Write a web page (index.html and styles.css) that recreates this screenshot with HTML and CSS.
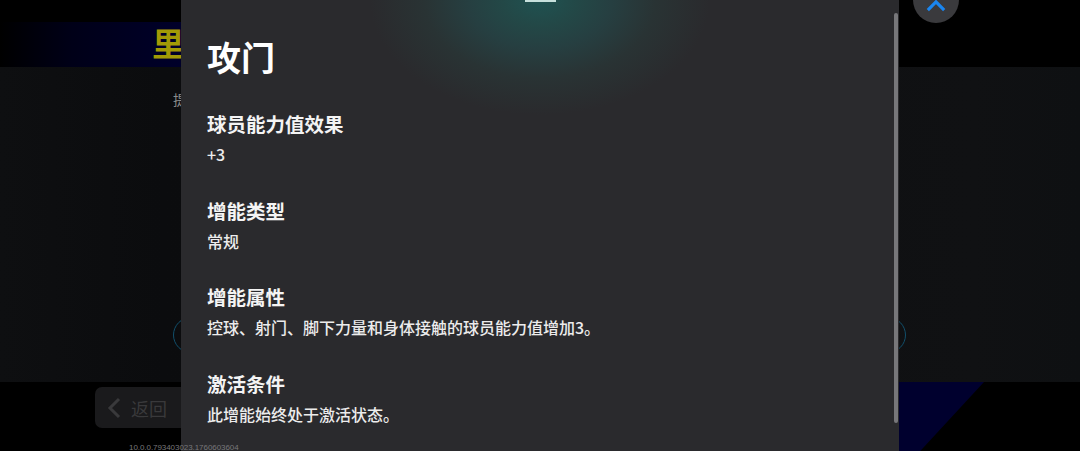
FILE: index.html
```html
<!DOCTYPE html>
<html lang="zh-CN">
<head>
    <meta charset="UTF-8">
    <title>攻门</title>
    <link rel="stylesheet" href="styles.css">
</head>
<body>
    <div class="screen">
        <div class="top-bar">
            <div class="title-band"><span class="page-title">里</span></div>
        </div>
        <div class="main-panel">
            <span class="panel-text">提</span>
            <div class="pill"></div>
        </div>
        <div class="bottom-bar">
            <div class="back-btn">
                <svg class="back-icon" viewBox="0 0 14 22"><path d="M12 2 L3 11 L12 20"/></svg>
                <span>返回</span>
            </div>
            <div class="corner"></div>
        </div>

        <div class="up-btn">
            <svg class="up-icon" viewBox="0 0 22 14"><path d="M2 12 L11 3 L20 12"/></svg>
        </div>

        <div class="modal">
            <div class="glow"></div>
            <div class="handle"></div>
            <div class="scrollbar"></div>
            <h1>攻门</h1>
            <div class="section">
                <h2>球员能力值效果</h2>
                <p>+3</p>
            </div>
            <div class="section">
                <h2>增能类型</h2>
                <p>常规</p>
            </div>
            <div class="section">
                <h2>增能属性</h2>
                <p>控球、射门、脚下力量和身体接触的球员能力值增加3。</p>
            </div>
            <div class="section">
                <h2>激活条件</h2>
                <p>此增能始终处于激活状态。</p>
            </div>
        </div>

        <div class="version">10.0.0.793403023.1760603604</div>
    </div>
</body>
</html>
```

FILE: styles.css
```css
body {
    margin: 0;
    background: #000;
    font-family: "Noto Sans CJK SC", "Noto Sans", sans-serif;
    color: #fff;
}
.screen {
    position: relative;
    width: 1080px;
    height: 451px;
    overflow: hidden;
    display: flex;
    flex-direction: column;
}
.top-bar {
    height: 67px;
    flex: none;
    display: flex;
    align-items: flex-end;
}
.title-band {
    width: 181px;
    height: 45px;
    box-sizing: border-box;
    background: linear-gradient(90deg, #000 0%, #000018 40%, #00002a 100%);
    display: flex;
    align-items: center;
    padding-left: 152px;
}
.page-title {
    font-size: 32px;
    font-weight: 700;
    line-height: 32px;
    color: #a29a06;
    margin-top: -5px;
}
.main-panel {
    position: relative;
    height: 315px;
    flex: none;
    background: linear-gradient(90deg, #0e0f11 0%, #0b0c0e 15%, #101113 90%, #0e1012 100%);
}
.panel-text {
    position: absolute;
    left: 173px;
    top: 24px;
    font-size: 14px;
    line-height: 16px;
    color: #8c8c8c;
}
.pill {
    position: absolute;
    left: 173px;
    top: 250px;
    width: 733px;
    height: 36px;
    box-sizing: border-box;
    border: 1.5px solid #114f6b;
    border-radius: 18px;
}
.bottom-bar {
    position: relative;
    flex: 1;
    background: #000;
}
.back-btn {
    position: absolute;
    left: 95px;
    top: 5px;
    width: 100px;
    height: 41px;
    box-sizing: border-box;
    padding-left: 12px;
    display: flex;
    align-items: center;
    gap: 10px;
    background: #1a1a1c;
    border-radius: 7px;
    font-size: 18px;
    color: #39393b;
}
.back-icon {
    width: 14px;
    height: 22px;
    fill: none;
    stroke: #39393b;
    stroke-width: 3;
}
.version {
    position: absolute;
    left: 129px;
    top: 442px;
    font-family: "Liberation Sans", sans-serif;
    font-size: 8px;
    line-height: 11px;
    letter-spacing: -0.06px;
    color: #77777a;
    white-space: nowrap;
}
.corner {
    position: absolute;
    left: 899px;
    top: 0;
    width: 85px;
    height: 69px;
    background: #00002e;
    clip-path: polygon(0 0, 100% 0, 25% 100%, 0 100%);
}
.up-btn {
    position: absolute;
    left: 913px;
    top: -23px;
    width: 46px;
    height: 46px;
    border-radius: 50%;
    background: #3a3a3d;
    display: flex;
    align-items: flex-end;
    justify-content: center;
}
.up-icon {
    width: 20px;
    height: 13px;
    margin-bottom: 11px;
    fill: none;
    stroke: #1a86f0;
    stroke-width: 3.5;
}
.modal {
    position: absolute;
    left: 181px;
    top: 0;
    width: 718px;
    height: 451px;
    box-sizing: border-box;
    padding: 35px 26px 0;
    background: #2a2a2d;
    overflow: hidden;
}
.glow {
    position: absolute;
    left: 159px;
    top: 0;
    width: 400px;
    height: 130px;
    background: radial-gradient(ellipse 170px 115px at 50% 0, #1f5251 0%, #234847 22%, #263f41 42%, #293334 68%, rgba(42, 42, 45, 0) 100%);
}
.handle {
    position: absolute;
    left: 344px;
    top: 0;
    width: 31px;
    height: 2px;
    background: #c6e0dc;
}
.scrollbar {
    position: absolute;
    left: 713px;
    top: 13px;
    width: 4px;
    height: 410px;
    background: #77777a;
    border-radius: 2px;
}
h1 {
    position: relative;
    margin: 0 0 31px;
    font-size: 34px;
    line-height: 44px;
    font-weight: 700;
}
.section {
    position: relative;
    height: 86.7px;
}
h2 {
    margin: 0;
    font-size: 19.5px;
    line-height: 28px;
    font-weight: 700;
    color: #f4f4f4;
}
p {
    margin: 2px 0 0;
    font-size: 16px;
    line-height: 28px;
    font-weight: 500;
    color: #ececec;
}
```
